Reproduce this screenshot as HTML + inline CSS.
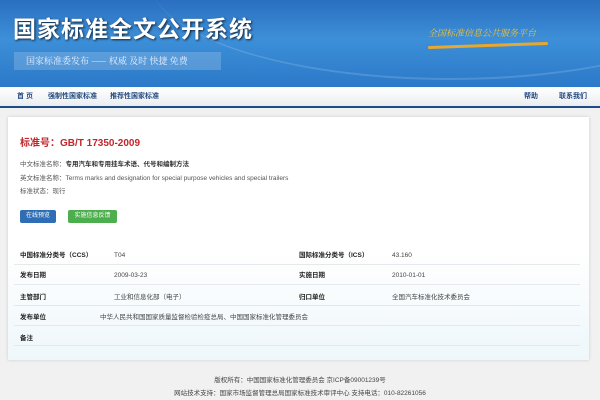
<!DOCTYPE html>
<html><head><meta charset="utf-8"><style>
*{margin:0;padding:0;box-sizing:border-box}
body{width:600px;height:400px;overflow:hidden;background:#f1f1f1;font-family:"Liberation Sans","Noto Sans CJK SC",sans-serif;position:relative}
.hd{position:absolute;left:0;top:0;width:600px;height:87px;background:linear-gradient(180deg,#2a6fc0 0%,#3d8fd8 45%,#2b79c9 100%);overflow:hidden}
.hd .arc{position:absolute;left:150px;top:-120px;width:600px;height:200px;border-radius:50%;border-bottom:2px solid rgba(255,255,255,.15)}
.t1{position:absolute;left:13px;top:16px;color:#fff;font-size:23px;line-height:26px;font-weight:bold;letter-spacing:1px;text-shadow:1px 1px 2px #123}
.t2{position:absolute;left:14px;top:52px;width:207px;height:18px;background:rgba(255,255,255,.18);color:#e8f0ff;font-size:9px;line-height:18px;padding-left:12px;font-family:"Noto Serif CJK SC",serif}
.t3{position:absolute;left:428px;top:27px;color:#f2c23a;font-size:9px;line-height:12px;font-style:italic;font-family:"Noto Serif CJK SC",serif}
.t3b{position:absolute;left:428px;top:44px;width:120px;height:3px;background:#e8a830;border-radius:2px;transform:rotate(-2deg)}
.nav{position:absolute;left:0;top:87px;width:600px;height:20px;background:linear-gradient(#fff,#e9ecef);font-size:7px;color:#244a80;line-height:20px}
.nav span{position:absolute;font-weight:bold}
.line{position:absolute;left:0;top:106px;width:600px;height:2px;background:#1e4d85}
.card{position:absolute;left:8px;top:117px;width:581px;height:243px;background:linear-gradient(#fff 55%,#eef7fb);box-shadow:0 0 3px #ccc}
.no{position:absolute;left:20px;top:137px;color:#c0262b;font-size:10px;line-height:14px;font-weight:bold}
.info{position:absolute;left:20px;font-size:6.5px;line-height:10px;color:#555}
.info b{color:#333;font-weight:bold}
.btn{position:absolute;top:210px;height:13px;font-size:6px;color:#fff;line-height:13px;text-align:center;border-radius:2px}
.row{position:absolute;left:14px;width:566px;height:1px;background:#e6e9ec}
.c{position:absolute;font-size:6.5px;line-height:10px;color:#444}
.k{font-weight:bold;color:#222}
.ft{position:absolute;width:600px;text-align:center;font-size:6.5px;line-height:10px;color:#444}
</style></head><body>
<div class="hd"><div class="arc"></div>
<div class="t1">国家标准全文公开系统</div>
<div class="t2">国家标准委发布 —— 权威 及时 快捷 免费</div>
<div class="t3">全国标准信息公共服务平台</div><div class="t3b"></div>
</div>
<div class="nav"><span style="left:17px">首 页</span><span style="left:48px">强制性国家标准</span><span style="left:110px">推荐性国家标准</span><span style="left:524px">帮助</span><span style="left:559px">联系我们</span></div>
<div class="line"></div>
<div class="card"></div>
<div class="no">标准号：GB/T 17350-2009</div>
<div class="info" style="top:160px">中文标准名称：<b>专用汽车和专用挂车术语、代号和编制方法</b></div>
<div class="info" style="top:174px">英文标准名称：Terms marks and designation for special purpose vehicles and special trailers</div>
<div class="info" style="top:187px">标准状态：现行</div>
<div class="btn" style="left:20px;width:36px;background:#2f6db5">在线预览</div>
<div class="btn" style="left:68px;width:49px;background:#4cae4c">实施信息反馈</div>
<div class="row" style="top:264px"></div><div class="row" style="top:284px"></div><div class="row" style="top:305px"></div><div class="row" style="top:325px"></div><div class="row" style="top:345px"></div>
<div class="c k" style="left:20px;top:251px">中国标准分类号（CCS）</div><div class="c" style="left:114px;top:251px">T04</div>
<div class="c k" style="left:299px;top:251px">国际标准分类号（ICS）</div><div class="c" style="left:392px;top:251px">43.160</div>
<div class="c k" style="left:20px;top:271px">发布日期</div><div class="c" style="left:114px;top:271px">2009-03-23</div>
<div class="c k" style="left:299px;top:271px">实施日期</div><div class="c" style="left:392px;top:271px">2010-01-01</div>
<div class="c k" style="left:20px;top:293px">主管部门</div><div class="c" style="left:114px;top:293px">工业和信息化部（电子）</div>
<div class="c k" style="left:299px;top:293px">归口单位</div><div class="c" style="left:392px;top:293px">全国汽车标准化技术委员会</div>
<div class="c k" style="left:20px;top:313px">发布单位</div><div class="c" style="left:100px;top:313px">中华人民共和国国家质量监督检验检疫总局、中国国家标准化管理委员会</div>
<div class="c k" style="left:20px;top:334px">备注</div>
<div class="ft" style="top:376px">版权所有：中国国家标准化管理委员会 京ICP备09001239号</div>
<div class="ft" style="top:389px">网站技术支持：国家市场监督管理总局国家标准技术审评中心 支持电话：010-82261056</div>
</body></html>
